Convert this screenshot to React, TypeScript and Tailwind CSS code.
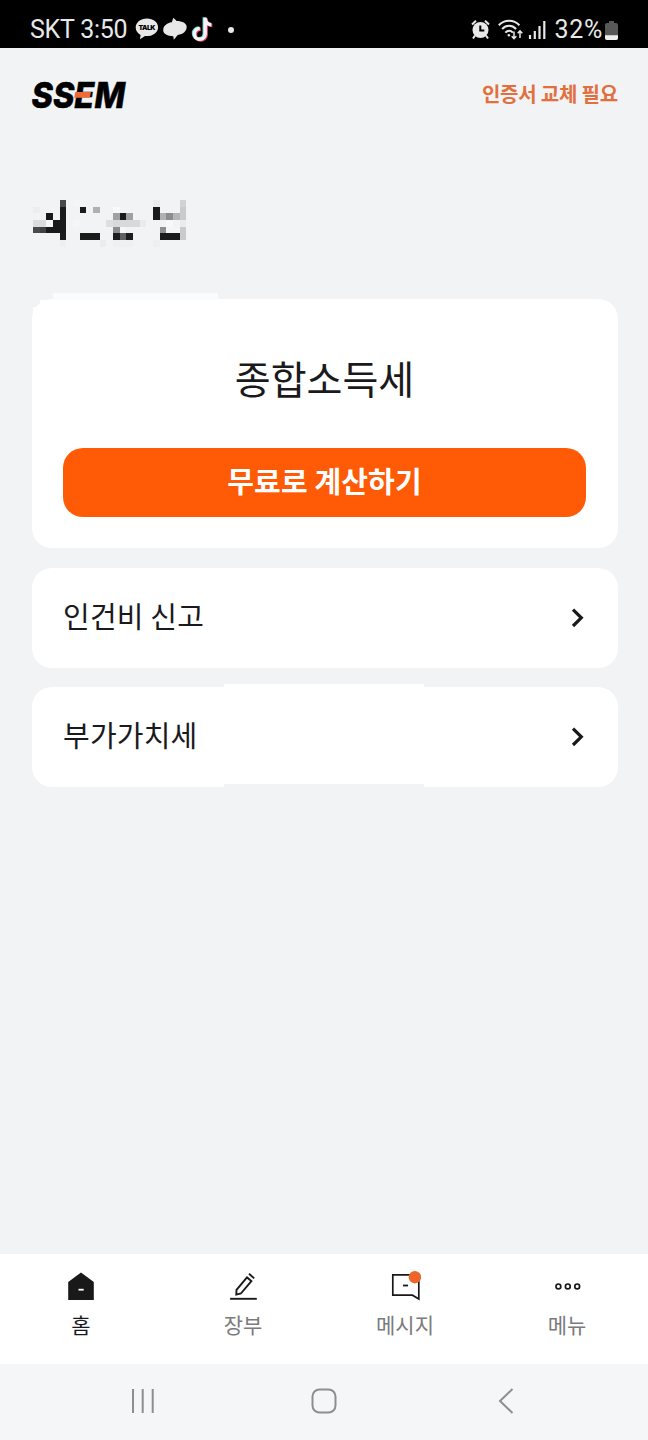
import React from "react";

interface Cell {
  row: number;
  col: number;
  span?: number;
  color: string;
}

interface NavItem {
  label: string;
  icon: React.ReactNode;
  active?: boolean;
}

// masked user name, one entry per mosaic block
const nameCells: Cell[] = [
  { row: 0, col: 4, color: "#49494b" },
  { row: 0, col: 6, color: "#f4f5f6" },
  { row: 0, col: 18, color: "#ececed" },
  { row: 0, col: 22, color: "#d1d2d4" },
  { row: 1, col: 0, color: "#ededee" },
  { row: 1, col: 4, color: "#1a1a1c" },
  { row: 1, col: 7, color: "#1a1c1b" },
  { row: 1, col: 9, color: "#b0b0b2" },
  { row: 1, col: 12, color: "#f8f9f9" },
  { row: 1, col: 18, color: "#1a1a1b" },
  { row: 1, col: 22, color: "#c9cacc" },
  { row: 2, col: 2, color: "#1a1a1c" },
  { row: 2, col: 4, color: "#1a1a1c" },
  { row: 2, col: 12, color: "#a1a1a3" },
  { row: 2, col: 13, color: "#1a1a1c" },
  { row: 2, col: 14, color: "#a0a0a2" },
  { row: 2, col: 18, color: "#1a1a1b" },
  { row: 2, col: 19, color: "#b0b1b3" },
  { row: 2, col: 20, color: "#8d8d8f" },
  { row: 2, col: 21, color: "#b4b5b7" },
  { row: 2, col: 22, color: "#c9cacc" },
  { row: 3, col: 0, span: 2, color: "#dcdcdd" },
  { row: 3, col: 2, color: "#f6f6f7" },
  { row: 3, col: 3, span: 2, color: "#1a1a1c" },
  { row: 3, col: 6, color: "#f5f6f7" },
  { row: 3, col: 11, color: "#dededf" },
  { row: 3, col: 12, span: 4, color: "#d9d9da" },
  { row: 3, col: 16, color: "#ebebec" },
  { row: 3, col: 20, color: "#f7f8f8" },
  { row: 3, col: 22, color: "#ebebed" },
  { row: 4, col: 0, color: "#494a4b" },
  { row: 4, col: 1, color: "#404142" },
  { row: 4, col: 2, span: 3, color: "#1a1a1c" },
  { row: 4, col: 12, color: "#8c8c8f" },
  { row: 4, col: 13, color: "#f6f7f8" },
  { row: 4, col: 19, color: "#909093" },
  { row: 4, col: 20, span: 2, color: "#f4f5f6" },
  { row: 4, col: 22, color: "#c9cacc" },
  { row: 5, col: 4, color: "#1c1c1e" },
  { row: 5, col: 7, span: 3, color: "#1a1c1b" },
  { row: 5, col: 12, color: "#1c1e1d" },
  { row: 5, col: 13, color: "#606162" },
  { row: 5, col: 14, color: "#1c1e1d" },
  { row: 5, col: 19, span: 3, color: "#1a1c1b" },
  { row: 5, col: 22, color: "#c9cacc" },
  { row: 6, col: 4, color: "#eeeff0" },
  { row: 6, col: 10, color: "#ebecee" },
  { row: 6, col: 12, span: 3, color: "#eff0f2" },
  { row: 6, col: 18, color: "#eeeff1" },
];

const navItems: NavItem[] = [
  {
    label: "홈",
    active: true,
    icon: (
      <svg width="32" height="32" viewBox="0 0 32 32">
        <path d="M16 2.5 3.2 12V30h25.6V12Z" fill="#191919" />
        <path d="M13.5 19.7h5.2" stroke="#fff" strokeWidth="1.8" />
      </svg>
    ),
  },
  {
    label: "장부",
    icon: (
      <svg width="32" height="32" viewBox="-.6 0 32 32" fill="none" stroke="#191919" strokeWidth="1.9">
        <path d="M8.7 24.6 8.9 19.8 19.4 7.4 23.8 11.1 13.3 23.5Z" />
        <path d="m21.4 3.8 5.2 4.6" />
        <path d="M2.5 28.8H29.2" />
      </svg>
    ),
  },
  {
    label: "메시지",
    icon: (
      <svg width="32" height="32" viewBox="-.6 0 32 32" fill="none" stroke="#191919" strokeWidth="1.7">
        <path d="M3.2 4.9H29.2V29L22.9 25.2H3.2Z" />
        <path d="M13.4 15.5h5" strokeWidth="1.8" />
        <circle cx="25.3" cy="7.2" r="6.2" fill="#ef6529" stroke="none" />
      </svg>
    ),
  },
  {
    label: "메뉴",
    icon: (
      <svg width="32" height="32" viewBox="-.8 0 32 32" fill="none" stroke="#191919" strokeWidth="1.7">
        <circle cx="6.6" cy="16.4" r="2.4" />
        <circle cx="16" cy="16.4" r="2.4" />
        <circle cx="25.4" cy="16.4" r="2.4" />
      </svg>
    ),
  },
];

const StatusBar: React.FC = () => (
  <div className="flex h-12 items-center bg-black pt-3 pr-[30px] pl-[30px] font-['Roboto',sans-serif] text-[25px] text-[#e8e8e8]">
    <span className="w-[105px] whitespace-nowrap tracking-[-0.25px]">SKT 3:50</span>
    <div className="flex">
      <svg width="24" height="24" viewBox="0 0 24 24">
        <path
          d="M12 1.5C5.6 1.5.7 5.4.7 10.5c0 3.1 1.8 5.8 4.9 7.4L5 22.2l5-3.2 2 .1c6.2 0 11.1-3.8 11.1-8.8S18.2 1.5 12 1.5Z"
          fill="#e8e8e8"
        />
        <text x="3.5" y="13.2" fill="#000" fontFamily="Inter" fontWeight="900" fontSize="6.8" textLength="17">
          TALK
        </text>
      </svg>
      <svg className="ml-1" width="24" height="24" viewBox="0 0 24 24">
        <path
          d="m10.3.7 3.4 3.2c5.6 0 10 2.3 10 5.8 0 4.4-3.4 7.3-9 8.3l-3.9 4.8-.5-3.6C4.600 19.200.2 17 .2 13.300.2 9 3.700 5.900 8.900 5.200Z"
          fill="#e8e8e8"
        />
      </svg>
      <svg className="ml-1" width="24" height="26" viewBox="0 0 24 26">
        <g fill="none" strokeWidth="3.5">
          <path d="M14.2.7V17a5.4 5.4 0 1 1-5.4-5.5M14.2 2.5c.7 3.4 3 5.1 6.1 5.3" stroke="#62d6d5" transform="translate(-.9 -.5)" />
          <path d="M14.2.7V17a5.4 5.4 0 1 1-5.4-5.5M14.2 2.5c.7 3.4 3 5.1 6.1 5.3" stroke="#e64363" transform="translate(1 .8)" />
          <path d="M14.2.7V17a5.4 5.4 0 1 1-5.4-5.5M14.2 2.5c.7 3.4 3 5.1 6.1 5.3" stroke="#f4f4f4" />
        </g>
      </svg>
    </div>
    <span className="ml-[13px] size-[6px] rounded-full bg-[#e8e8e8]" />

    <div className="ml-auto flex items-center">
      <svg width="20" height="20" viewBox="0 0 20 20">
        <circle cx="9.5" cy="10" r="8" fill="#e8e8e8" />
        <path d="M1 4.500 5 .8M14 .8 18 4.500M4 15.500l-2 3M15 15.500l2 3" stroke="#e8e8e8" strokeWidth="2" />
        <path d="M9.300 5.500v5h4" fill="none" stroke="#000" strokeWidth="2" />
      </svg>
      <svg className="ml-[7px]" width="26" height="22" viewBox="0 0 26 22" fill="none" stroke="#e8e8e8" strokeWidth="2">
        <path d="M.8 6.2C6.5.2 15.7.2 21.4 6.2M4.1 10c4-4.2 9.9-4.2 14 0M7.3 13.6c2.4-2.4 5.3-2.4 7.6 0" />
        <circle cx="10.8" cy="16.3" r="1.3" fill="#e8e8e8" stroke="none" />
        <path d="M16 12.5v7M13.7 17.2l2.3 2.4 2.3-2.4M22 19v-7M19.7 14.2l2.3-2.4 2.3 2.4" strokeWidth="1.5" />
      </svg>
      <svg className="ml-1" width="18" height="20" viewBox="0 0 18 20" stroke="#e8e8e8" strokeWidth="2.2">
        <path d="M2 15v4M6.8 11v8M11.5 6v13M16.3 1v18" />
      </svg>
      <span className="ml-[8px] tracking-[0.7px]">32%</span>
      <svg className="ml-[2px]" width="13" height="19" viewBox="0 0 13 19">
        <path d="M4 0h5v2h2q2 0 2 2v13q0 2-2 2H2q-2 0-2-2V4q0-2 2-2h2Z" fill="#585858" />
        <path d="M0 14.2h13V17q0 2-2 2H2q-2 0-2-2Z" fill="#f0f0f0" />
      </svg>
    </div>
  </div>
);

const Logo: React.FC = () => (
  <svg className="overflow-visible" width="110" height="31" viewBox="0 0 110 31">
    <text
      x="-.5"
      y="28.800"
      fontFamily="Inter"
      fontSize="36"
      fontWeight="800"
      fontStyle="italic"
      textLength="93.500"
      lengthAdjust="spacingAndGlyphs"
      stroke="#000"
      strokeWidth=".5"
    >
      SSEM
    </text>
    <path d="M43.300 12.900H59l-1.200 5.800H42.200Z" fill="#ef6a36" />
  </svg>
);

const MaskedName: React.FC = () => (
  <svg width="156" height="48" viewBox="0 0 23.4 7.2" shapeRendering="crispEdges">
    {nameCells.map((cell) => (
      <rect key={`${cell.row}-${cell.col}`} x={cell.col} y={cell.row} width={cell.span ?? 1} height="1" fill={cell.color} />
    ))}
  </svg>
);

const LinkCard: React.FC<{ label: string; children?: React.ReactNode }> = ({ label, children }) => (
  <button className="relative flex h-[100px] w-full items-center justify-between rounded-[20px] bg-white pr-[33px] pl-[31px]">
    {children}
    <span className="relative pb-[5px] text-[29px] leading-none tracking-[0.2px]">{label}</span>
    <svg className="relative" width="14" height="20" viewBox="0 0 14 20" fill="none" stroke="#191919" strokeWidth="3.2">
      <path d="m2 1.6 8.3 8.2L2 18" />
    </svg>
  </button>
);

export default function App() {
  return (
    <div className="flex h-[1440px] w-[648px] flex-col overflow-hidden bg-[#f1f3f5] font-['Noto_Sans_CJK_KR',sans-serif] text-[#1a1a1c]">
      <StatusBar />

      {/* Header */}
      <header className="flex h-[93px] items-center justify-between pr-[30px] pl-8">
        <Logo />
        <span className="pb-[2px] text-[20px] font-bold tracking-[-0.2px] text-[#e2703f]">인증서 교체 필요</span>
      </header>

      {/* Main content */}
      <main className="flex-1 pr-[30px] pl-8">
        <div className="mt-[59px] ml-[1px] h-[99px]">
          <MaskedName />
        </div>

        <section className="relative h-[249px] rounded-[20px] bg-white pt-[52px] pr-8 pl-[31px]">
          <div className="absolute -top-[6px] left-[21px] h-[7px] w-[165px] bg-[#fafbfd]" />
          <div className="absolute top-[1px] left-[8px] h-[30px] w-[100px] bg-white" />
          <div className="absolute top-[8px] left-[1px] h-[30px] w-[100px] bg-white" />
          <h1 className="relative text-center text-[39px] leading-[52px]">종합소득세</h1>
          <button className="mt-[45px] h-[69px] w-full rounded-[20px] bg-[#ff5a05] pb-[4px] text-[29px] leading-none font-bold tracking-[0.15px] text-white">
            무료로 계산하기
          </button>
        </section>

        <div className="mt-5 flex flex-col gap-[19px]">
          <LinkCard label="인건비 신고" />
          <LinkCard label="부가가치세">
            <span className="absolute -top-[3px] left-[192px] h-[100px] w-[200px] bg-white" />
            <span className="absolute -bottom-px left-[192px] h-1 w-[200px] bg-[#f1f3f5]" />
          </LinkCard>
        </div>
      </main>

      {/* Tab bar */}
      <nav className="grid h-[110px] grid-cols-4 bg-white pt-[16px]">
        {navItems.map((item) => (
          <button key={item.label} className="flex flex-col items-center">
            {item.icon}
            <span className={item.active ? "mt-[7px] text-[21px] leading-[30px]" : "mt-[7px] text-[21px] leading-[30px] text-[#7b7b7b]"}>
              {item.label}
            </span>
          </button>
        ))}
      </nav>

      {/* System navigation */}
      <div className="flex h-[76px] items-center justify-between bg-[#f5f6f8] px-[129px] pb-[2px]">
        <svg width="28" height="28" viewBox="0 0 28 28" stroke="#8e8e8e" strokeWidth="2">
          <path d="M4 2v24M13.7 2v24M23.7 2v24" />
        </svg>
        <svg width="28" height="28" viewBox="0 0 28 28" fill="none" stroke="#8e8e8e" strokeWidth="2">
          <rect x="2.5" y="2.5" width="23" height="23" rx="7" />
        </svg>
        <svg width="28" height="28" viewBox="0 0 28 28" fill="none" stroke="#8e8e8e" strokeWidth="2">
          <path d="M21.500 2 9 14 21.500 26" />
        </svg>
      </div>
    </div>
  );
}
